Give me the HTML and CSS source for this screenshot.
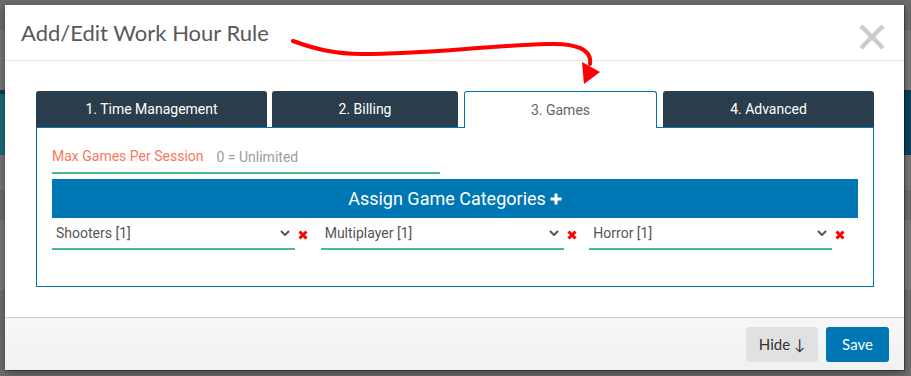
FILE: index.html
```html
<!DOCTYPE html>
<html lang="en">
<head>
    <meta charset="UTF-8">
    <meta name="viewport" content="width=device-width, initial-scale=1.0">
    <title>Add/Edit Work Hour Rule</title>
    <link rel="stylesheet" href="styles.css">
</head>
<body>
    <div class="page">
        <div class="band band-top"></div>
        <div class="band band-light"></div>
        <div class="band band-nav"></div>
        <div class="band band-light2"></div>
        <div class="band band-dark"></div>
        <div class="band band-light3"></div>
        <div class="band band-rest"></div>
    </div>

    <div class="modal">
        <div class="modal-header">
            <h4 class="modal-title">Add/Edit Work Hour Rule</h4>
            <svg class="close" width="26" height="26" viewBox="0 0 26 26">
                <path d="M2 2 L24 24 M24 2 L2 24" stroke="#cbcbcb" stroke-width="4.5" fill="none"/>
            </svg>
        </div>
        <div class="modal-body">
            <div class="tabs">
                <div class="tab tab-1">1. Time Management</div>
                <div class="tab tab-2">2. Billing</div>
                <div class="tab tab-3 active">3. Games</div>
                <div class="tab tab-4">4. Advanced</div>
            </div>
            <div class="tab-panel">
                <div class="field">
                    <span class="field-label">Max Games Per Session</span>
                    <span class="field-placeholder">0 = Unlimited</span>
                </div>
                <div class="assign-bar">
                    <span>Assign Game Categories</span>
                    <svg width="12" height="12" viewBox="0 0 12 12">
                        <path d="M6 0.5 V11.5 M0.5 6 H11.5" stroke="#fff" stroke-width="3" fill="none"/>
                    </svg>
                </div>
                <div class="categories">
                    <div class="category">
                        <div class="select">
                            <span>Shooters [1]</span>
                            <svg width="10" height="6" viewBox="0 0 10 6"><path d="M1 1 L5 5 L9 1" stroke="#555" stroke-width="2" fill="none"/></svg>
                        </div>
                        <svg class="remove" width="10" height="10" viewBox="0 0 10 10"><path d="M1.5 1.5 L8.5 8.5 M8.5 1.5 L1.5 8.5" stroke="#f00" stroke-width="3" fill="none"/></svg>
                    </div>
                    <div class="category">
                        <div class="select">
                            <span>Multiplayer [1]</span>
                            <svg width="10" height="6" viewBox="0 0 10 6"><path d="M1 1 L5 5 L9 1" stroke="#555" stroke-width="2" fill="none"/></svg>
                        </div>
                        <svg class="remove" width="10" height="10" viewBox="0 0 10 10"><path d="M1.5 1.5 L8.5 8.5 M8.5 1.5 L1.5 8.5" stroke="#f00" stroke-width="3" fill="none"/></svg>
                    </div>
                    <div class="category">
                        <div class="select">
                            <span>Horror [1]</span>
                            <svg width="10" height="6" viewBox="0 0 10 6"><path d="M1 1 L5 5 L9 1" stroke="#555" stroke-width="2" fill="none"/></svg>
                        </div>
                        <svg class="remove" width="10" height="10" viewBox="0 0 10 10"><path d="M1.5 1.5 L8.5 8.5 M8.5 1.5 L1.5 8.5" stroke="#f00" stroke-width="3" fill="none"/></svg>
                    </div>
                </div>
            </div>
        </div>
        <div class="modal-footer">
            <button class="btn btn-hide">Hide &darr;</button>
            <button class="btn btn-save">Save</button>
        </div>
    </div>

    <!-- hand drawn pointer to the Games tab -->
    <svg class="annotation" width="911" height="376" viewBox="0 0 911 376">
        <path d="M293 41 C315 49 335 54 362 54 C430 54 480 46 548 44 C578 43 592 50 590 64" stroke="#f00" stroke-width="4" fill="none" stroke-linecap="round"/>
        <polygon points="582,62 600,72 584,84" fill="#f00"/>
    </svg>
</body>
</html>
```

FILE: styles.css
```css
body {
    margin: 0;
    width: 911px;
    height: 376px;
    overflow: hidden;
    position: relative;
    background-color: #6e6e6e;
    font-family: Roboto, Arial, sans-serif;
}
.page {
    display: flex;
    flex-direction: column;
    height: 100%;
}
.band-top {
    height: 30px;
    background: #6c6c6c;
}
.band-light {
    height: 60px;
    background: #777777;
}
.band-nav {
    height: 65px;
    background: linear-gradient(90deg, #1b6c76, #0c3f5f);
    border-top: 4px solid #123c55;
    box-sizing: border-box;
}
.band-light2 {
    height: 35px;
    background: #777777;
}
.band-dark {
    height: 30px;
    background: #6d6d6d;
}
.band-light3 {
    height: 70px;
    background: #7a7a7a;
}
.band-rest {
    flex: 1;
    background: #6e6e6e;
}
.modal {
    position: absolute;
    left: 5px;
    top: 5px;
    width: 899px;
    height: 365px;
    background: white;
    display: flex;
    flex-direction: column;
    box-shadow: 1px 1px 0 rgba(0, 0, 0, 0.35), 0 3px 9px rgba(0, 0, 0, 0.4);
}
.modal-header {
    height: 55px;
    border-bottom: 1px solid #e5e5e5;
    display: flex;
    align-items: center;
    justify-content: space-between;
    padding: 0 19px 0 16px;
}
.modal-title {
    margin: 0;
    font-family: Lato, sans-serif;
    font-weight: normal;
    font-size: 22px;
    color: #585858;
}
.close {
    margin-top: 9px;
}
.modal-body {
    flex: 1;
    padding: 30px 30px 30px 31px;
}
.tabs {
    display: flex;
    height: 36px;
}
.tab {
    box-sizing: border-box;
    height: 36px;
    background: #2a3d4c;
    color: white;
    font-size: 14px;
    border-radius: 3px 3px 0 0;
    display: flex;
    align-items: center;
    justify-content: center;
    margin-right: 5px;
}
.tab-1 { width: 231px; }
.tab-2 { width: 186px; margin-right: 6px; }
.tab-3 { width: 193px; margin-right: 6px; }
.tab-4 { width: 211px; margin-right: 0; }
.tab.active {
    background: white;
    color: #666;
    border: 1px solid #0077b5;
    border-bottom: none;
    height: 37px;
    position: relative;
    z-index: 1;
}
.tab-panel {
    box-sizing: border-box;
    height: 160px;
    border: 1px solid #0077b5;
    padding: 15px;
}
.field {
    box-sizing: border-box;
    width: 388px;
    height: 31px;
    padding-bottom: 4px;
    border-bottom: 2px solid #4dbb88;
    display: flex;
    align-items: center;
    font-size: 14px;
}
.field-label {
    color: #f4795a;
}
.field-placeholder {
    color: #9c9c9c;
    margin-left: 13px;
    margin-top: 2px;
}
.assign-bar {
    margin-top: 5px;
    height: 39px;
    background: #0077b5;
    color: white;
    font-size: 18px;
    display: flex;
    align-items: center;
    justify-content: center;
    gap: 4px;
}
.categories {
    display: grid;
    grid-template-columns: repeat(3, 1fr);
}
.category {
    display: flex;
    align-items: center;
}
.select {
    box-sizing: border-box;
    width: 243px;
    height: 32px;
    border-bottom: 2px solid #4dbb88;
    display: flex;
    align-items: center;
    justify-content: space-between;
    padding: 0 5px 0 4px;
    font-size: 14px;
    color: #555;
}
.remove {
    margin-left: 3px;
    margin-top: 2px;
}
.modal-footer {
    height: 53px;
    box-sizing: border-box;
    border-top: 1px solid #cccccc;
    background: linear-gradient(#f7f7f7, #f1f1f1);
    display: flex;
    align-items: center;
    justify-content: flex-end;
    gap: 8px;
    padding: 0 15px 0 0;
}
.btn {
    font-family: Lato, sans-serif;
    font-size: 15px;
    height: 35px;
    border: none;
    border-radius: 3px;
    cursor: pointer;
}
.btn-hide {
    width: 72px;
    background: #e1e1e1;
    color: #333;
}
.btn-save {
    width: 63px;
    background: #0077b5;
    color: white;
}
.annotation {
    position: absolute;
    left: 0;
    top: 0;
    pointer-events: none;
}
```
